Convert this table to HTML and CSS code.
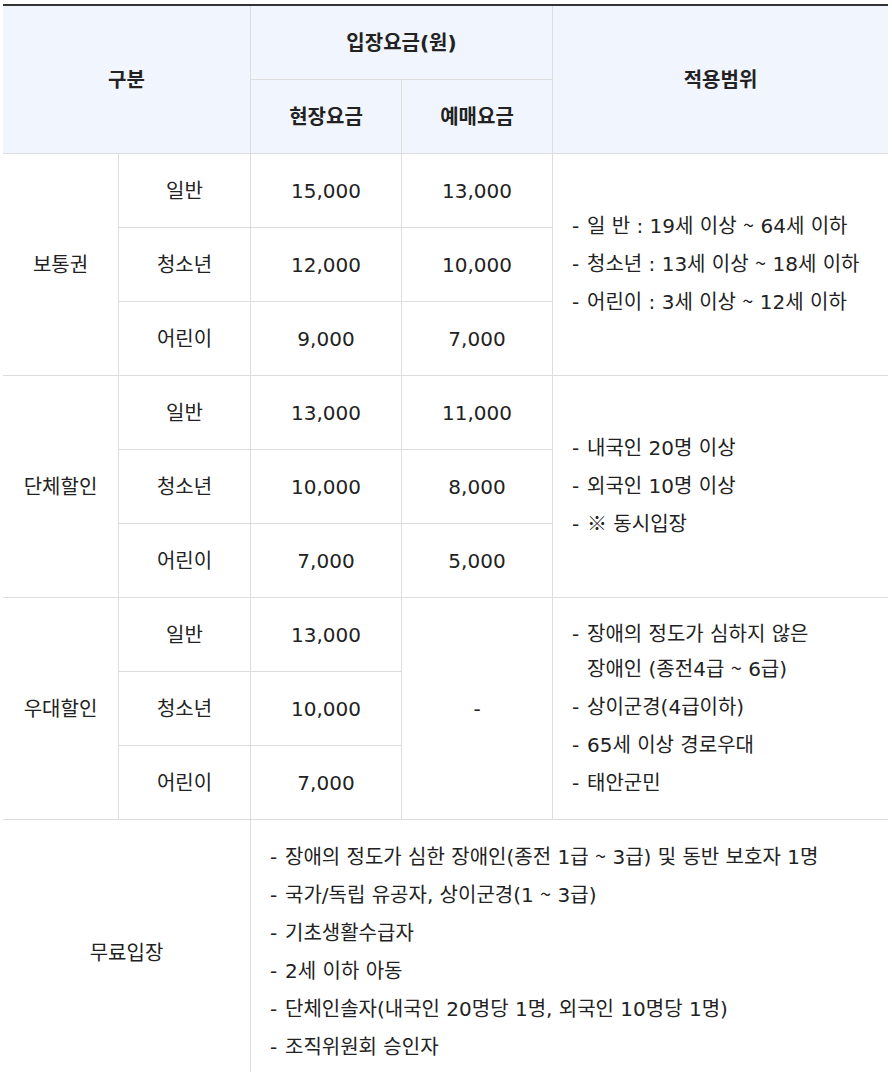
FILE: index.html
```html
<!DOCTYPE html>
<html lang="ko">
<head>
<meta charset="utf-8">
<link rel="stylesheet" href="styles.css">
</head>
<body>
<div class="fee-table">
  <div class="cell head span-c2 span-r2">구분</div>
  <div class="cell head span-c2">입장요금(원)</div>
  <div class="cell head span-r2">적용범위</div>
  <div class="cell head">현장요금</div>
  <div class="cell head">예매요금</div>

  <div class="cell span-r3">보통권</div>
  <div class="cell">일반</div>
  <div class="cell num">15,000</div>
  <div class="cell num">13,000</div>
  <div class="cell span-r3 notes">
    <ul>
      <li><span class="dash">-</span><span>일 반 : 19세 이상 <span class="cjk">~</span> 64세 이하</span></li>
      <li><span class="dash">-</span><span>청소년 : 13세 이상 <span class="cjk">~</span> 18세 이하</span></li>
      <li><span class="dash">-</span><span>어린이 : 3세 이상 <span class="cjk">~</span> 12세 이하</span></li>
    </ul>
  </div>
  <div class="cell">청소년</div>
  <div class="cell num">12,000</div>
  <div class="cell num">10,000</div>
  <div class="cell">어린이</div>
  <div class="cell num">9,000</div>
  <div class="cell num">7,000</div>

  <div class="cell span-r3">단체할인</div>
  <div class="cell">일반</div>
  <div class="cell num">13,000</div>
  <div class="cell num">11,000</div>
  <div class="cell span-r3 notes">
    <ul>
      <li><span class="dash">-</span><span>내국인 20명 이상</span></li>
      <li><span class="dash">-</span><span>외국인 10명 이상</span></li>
      <li><span class="dash">-</span><span><span class="cjk">※</span> 동시입장</span></li>
    </ul>
  </div>
  <div class="cell">청소년</div>
  <div class="cell num">10,000</div>
  <div class="cell num">8,000</div>
  <div class="cell">어린이</div>
  <div class="cell num">7,000</div>
  <div class="cell num">5,000</div>

  <div class="cell span-r3">우대할인</div>
  <div class="cell">일반</div>
  <div class="cell num">13,000</div>
  <div class="cell span-r3">-</div>
  <div class="cell span-r3 notes">
    <ul>
      <li><span class="dash">-</span><span>장애의 정도가 심하지 않은<br>장애인 (종전4급 <span class="cjk">~</span> 6급)</span></li>
      <li><span class="dash">-</span><span>상이군경(4급이하)</span></li>
      <li><span class="dash">-</span><span>65세 이상 경로우대</span></li>
      <li><span class="dash">-</span><span>태안군민</span></li>
    </ul>
  </div>
  <div class="cell">청소년</div>
  <div class="cell num">10,000</div>
  <div class="cell">어린이</div>
  <div class="cell num">7,000</div>

  <div class="cell span-c2">무료입장</div>
  <div class="cell span-c3 notes free-notes">
    <ul>
      <li><span class="dash">-</span><span>장애의 정도가 심한 장애인(종전 1급 <span class="cjk">~</span> 3급) 및 동반 보호자 1명</span></li>
      <li><span class="dash">-</span><span>국가/독립 유공자, 상이군경(1 <span class="cjk">~</span> 3급)</span></li>
      <li><span class="dash">-</span><span>기초생활수급자</span></li>
      <li><span class="dash">-</span><span>2세 이하 아동</span></li>
      <li><span class="dash">-</span><span>단체인솔자(내국인 20명당 1명, 외국인 10명당 1명)</span></li>
      <li><span class="dash">-</span><span>조직위원회 승인자</span></li>
    </ul>
  </div>
</div>
</body>
</html>
```

FILE: styles.css
```css
html, body {
  margin: 0;
  padding: 0;
  background: #fff;
}
body {
  padding: 4px 0 0 3px;
  font-family: "DejaVu Sans", "Noto Sans CJK KR", sans-serif;
  color: #222;
  font-size: 20px;
}
.fee-table {
  width: 885px;
  display: grid;
  grid-template-columns: 115px 131px 150px 150px 335px;
  grid-template-rows: repeat(11, 73px) auto;
  gap: 1px;
  background: #dddddd;
  border-top: 2px solid #333;
}
.cell {
  background: #fff;
  display: flex;
  align-items: center;
  justify-content: center;
  text-align: center;
  line-height: 1.3;
}
.head {
  background: #f1f5fd;
  font-weight: 700;
}
.span-c2 { grid-column: span 2; }
.span-c3 { grid-column: span 3; }
.span-r2 { grid-row: span 2; }
.span-r3 { grid-row: span 3; }
.notes {
  justify-content: flex-start;
  text-align: left;
  padding-left: 19px;
}
.notes ul {
  list-style: none;
  margin: 0;
  padding: 0;
  display: flex;
  flex-direction: column;
  gap: 3px;
}
.notes li {
  display: flex;
  line-height: 35px;
}
.dash {
  flex: 0 0 15px;
}
.cjk {
  font-family: "Noto Sans CJK KR", sans-serif;
  line-height: 0;
}
.free-notes {
  padding-top: 20px;
  padding-bottom: 20px;
}
```
